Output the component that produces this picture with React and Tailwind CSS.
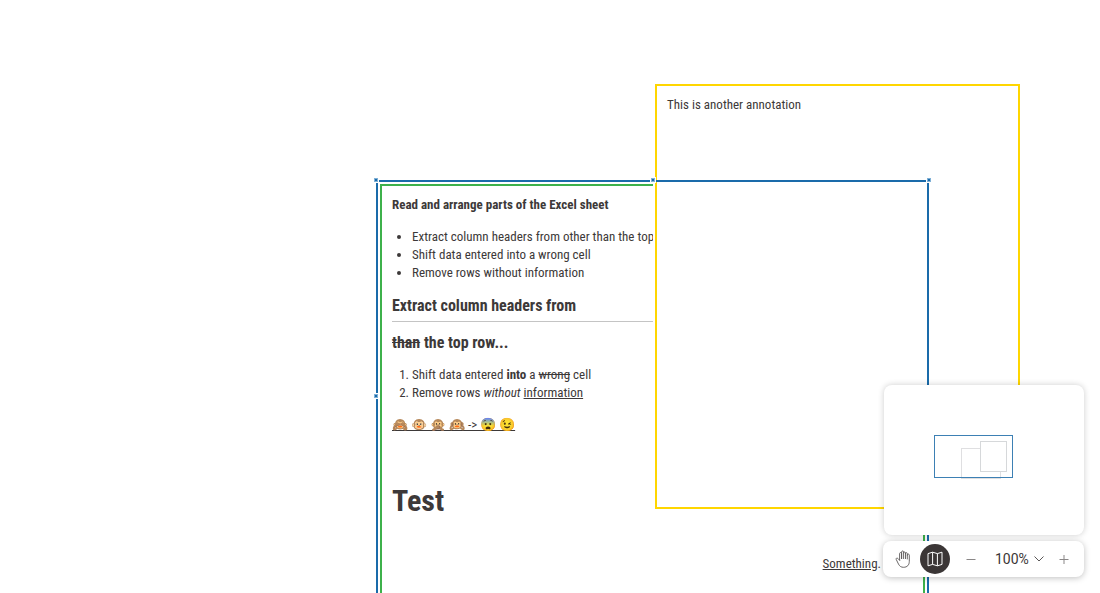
const HANDLES = [
  "left-[-5px] top-[-5px]",
  "left-[272px] top-[-5px]",
  "right-[-5px] top-[-5px]",
  "left-[-5px] top-[211px]",
];

function Handle({ place }) {
  return (
    <span className={`absolute size-[6px] bg-white p-px ${place}`}>
      <span className="block size-[4px] border border-[#7fb0d6] bg-[#1a6baa]" />
    </span>
  );
}

function MainNote() {
  return (
    <article className="absolute left-[380px] top-[184px] h-[426px] w-[545px] border-2 border-[#3db14b] bg-white px-[10px] py-[10px] text-[13px] leading-[18px]">
      <p className="font-bold">Read and arrange parts of the Excel sheet</p>
      <ul className="mt-[14px] list-disc pl-5">
        <li>Extract column headers from other than the top row</li>
        <li>Shift data entered into a wrong cell</li>
        <li>Remove rows without information</li>
      </ul>
      <h2 className="mt-[14px] border-b border-[#c4c4c4] pb-[5px] text-[16px] font-bold leading-[20px]">
        Extract column headers from
      </h2>
      <h2 className="mt-[11px] text-[16px] font-bold leading-[20px]">
        <s>than</s> the top row...
      </h2>
      <ol className="mt-[13px] list-decimal pl-5">
        <li>
          Shift data entered <strong>into</strong> a <s>wrong</s> cell
        </li>
        <li>
          Remove rows <em>without</em> <u>information</u>
        </li>
      </ol>
      <p className="mt-[14px]">
        <u>🙈 🐵 🙊 🙉 -&gt; 😨 😉</u>
      </p>
      <h1 className="mt-[49px] text-[30px] font-bold leading-[36px]">Test</h1>
      <p className="mt-9 pr-8 text-right">
        <u>Something</u>.
      </p>
    </article>
  );
}

function IconHand() {
  return (
    <svg viewBox="0 0 16 18" className="h-[18px] w-4" fill="none" stroke="#5a5757" strokeWidth="0.9" strokeLinecap="round" strokeLinejoin="round">
      <path d="M4.6 10.2 2.8 8.4C2 7.6.7 8.300 1.200 9.400l2.300 4.700C4.600 16.300 6.200 17.300 8.500 17.300c3.700 0 5.800-2.300 5.800-6V5.200c0-1.500-2-1.500-2 0" />
      <path d="M4.600 10.200V3.600c0-1.400 2-1.400 2 0v5M6.600 8.600V2c0-1.400 2-1.400 2 0v6.600M8.600 3c0-1.400 1.900-1.400 1.900 0v5.600M10.500 3.600c0-1.300 1.800-1.300 1.800 0v5.400" />
    </svg>
  );
}

function IconMap() {
  return (
    <svg viewBox="0 0 16 16" className="size-4" fill="none" stroke="white" strokeWidth="1" strokeLinejoin="round">
      <path d="M1 2.600 5.600 1.200 10.400 2.600 15 1.200V13.400L10.400 14.800 5.600 13.400 1 14.800ZM5.600 1.200V13.400M10.400 2.600V14.800" />
    </svg>
  );
}

function Minimap() {
  return (
    <div className="h-[150px] w-[200px] self-end rounded-lg bg-white shadow-[0_0_6px_rgba(0,0,0,0.2)]">
      <svg viewBox="0 0 200 150" className="size-full" fill="white">
        <rect x="77.500" y="63.500" width="39" height="30" stroke="#dfdfe1" />
        <rect x="96.500" y="56.500" width="26" height="30" stroke="#d6d8da" />
        <rect x="50.500" y="50.500" width="78" height="42" fill="none" stroke="#3d80b4" />
      </svg>
    </div>
  );
}

function Toolbar() {
  return (
    <div className="flex h-9 w-[201px] items-center rounded-lg bg-white text-[#5a5757] shadow-[0_1px_6px_rgba(0,0,0,0.25)]">
      <button aria-label="Pan" className="ml-[5px] flex size-[30px] items-center justify-center">
        <IconHand />
      </button>
      <button aria-label="Toggle map" className="ml-[2px] flex size-[30px] items-center justify-center rounded-full bg-[#3b3636]">
        <IconMap />
      </button>
      <button aria-label="Zoom out" className="ml-[11px] flex h-[30px] w-5 items-center justify-center">
        <svg viewBox="0 0 10 10" className="size-[10px]" stroke="#8a8787"><path d="M.5 5.500H9.500" /></svg>
      </button>
      <button className="ml-[14px] flex items-center gap-[5px] font-['Roboto',sans-serif] text-[14px] text-[#3b3636]">
        100%
        <svg viewBox="0 0 10 6" className="h-[6px] w-[10px]" fill="none" stroke="#5a5757"><path d="M.5.500 5 5 9.500.500" /></svg>
      </button>
      <button aria-label="Zoom in" className="ml-[10px] flex h-[30px] w-5 items-center justify-center">
        <svg viewBox="0 0 10 10" className="size-[10px]" stroke="#8a8787"><path d="M.5 5.500H9.500M5 1V10" /></svg>
      </button>
    </div>
  );
}

export default function App() {
  return (
    <main className="relative h-screen overflow-hidden bg-white font-['Roboto_Condensed','Roboto',sans-serif] text-[#3d3939]">
      <MainNote />
      <article className="absolute left-[655px] top-[84px] h-[425px] w-[365px] border-2 border-[#ffd600] bg-white p-[10px] text-[13px] leading-[18px] outline-2 outline-white">
        This is another annotation
      </article>
      <div className="pointer-events-none absolute left-[376px] top-[180px] h-[434px] w-[553px] border-2 border-[#1a6baa]">
        {HANDLES.map((place) => (
          <Handle key={place} place={place} />
        ))}
      </div>
      <aside className="absolute bottom-4 right-4 flex flex-col gap-[6px]">
        <Minimap />
        <Toolbar />
      </aside>
    </main>
  );
}
